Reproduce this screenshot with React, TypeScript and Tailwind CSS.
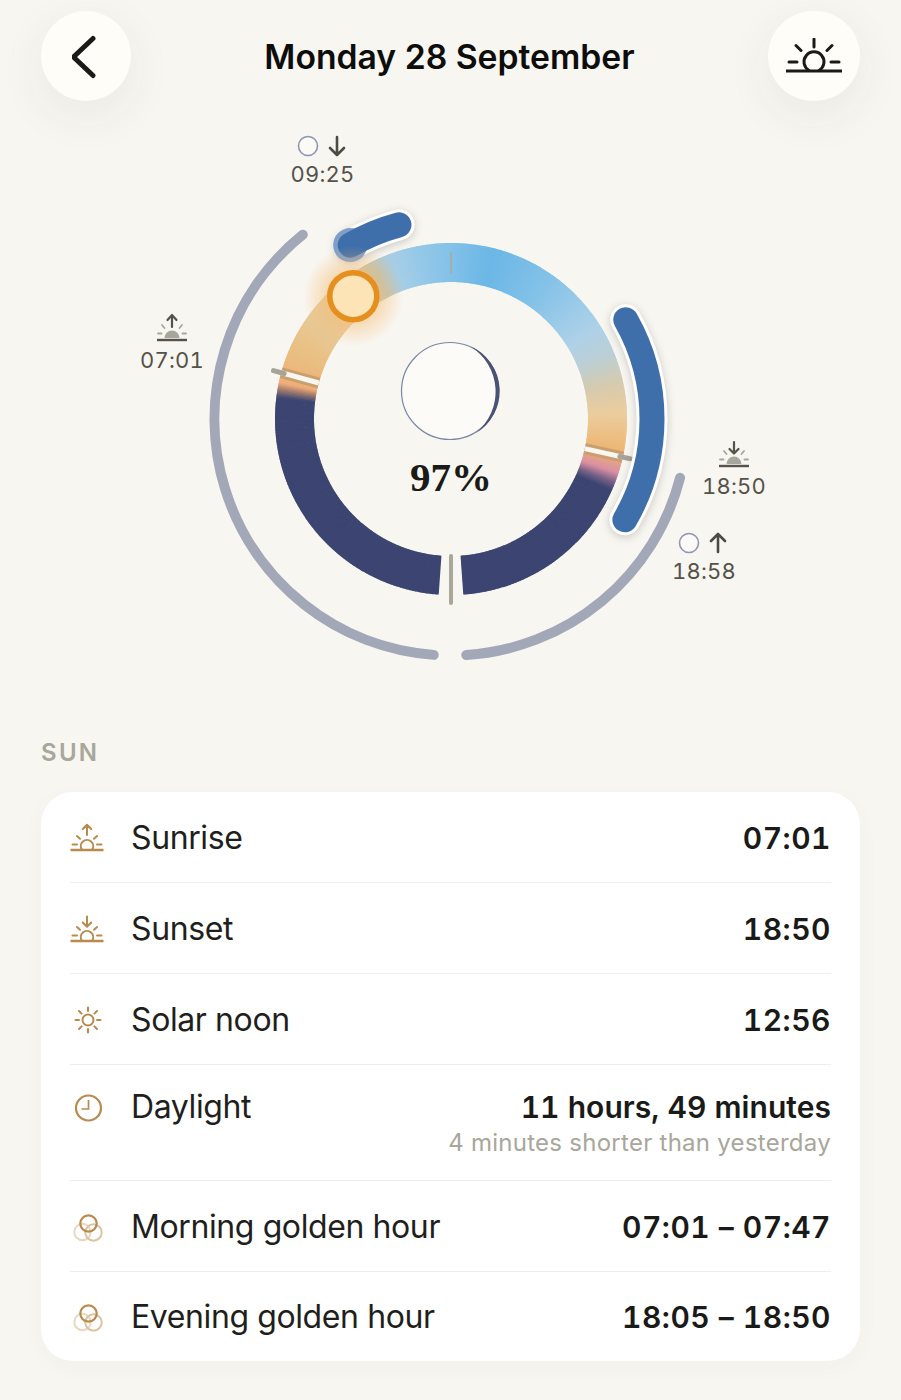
import type { ReactNode } from 'react';

const CX = 451;
const CY = 419;

type Stop = [number, string];

// ring colours by clock angle, 0 is the top of the dial
const ringStops: Stop[] = [
  [0, '#83c1e8'],
  [14, '#6bb7e6'],
  [35, '#84c2e8'],
  [58, '#aed1e8'],
  [68, '#bccfd4'],
  [78, '#d6cbae'],
  [88, '#ebcd9e'],
  [100, '#ecb877'],
  [105, '#e3a08c'],
  [108, '#d98ea2'],
  [111, '#7d6488'],
  [114, '#3c4571'],
  [277, '#3c4571'],
  [280, '#a8806f'],
  [282, '#f0ae78'],
  [292, '#e9be80'],
  [312, '#e8cda0'],
  [325, '#dcc79c'],
  [333, '#bcc8bc'],
  [340, '#a6cee6'],
  [350, '#93c8e8'],
  [360, '#83c1e8'],
];

function polar(r: number, deg: number) {
  const rad = ((deg - 90) * Math.PI) / 180;
  return [CX + r * Math.cos(rad), CY + r * Math.sin(rad)];
}

function arc(r: number, from: number, to: number) {
  const [x1, y1] = polar(r, from);
  const [x2, y2] = polar(r, to);
  const large = to - from > 180 ? 1 : 0;
  return `M${x1} ${y1}A${r} ${r} 0 ${large} 1 ${x2} ${y2}`;
}

function hex(c: string) {
  return [1, 3, 5].map((i) => parseInt(c.slice(i, i + 2), 16));
}

function colorAt(deg: number) {
  const a = ((deg % 360) + 360) % 360;
  for (let i = 0; i < ringStops.length - 1; i++) {
    const [d1, c1] = ringStops[i];
    const [d2, c2] = ringStops[i + 1];
    if (a >= d1 && a <= d2) {
      const t = (a - d1) / (d2 - d1);
      const p = hex(c1);
      const q = hex(c2);
      const rgb = p.map((v, j) => Math.round(v + (q[j] - v) * t));
      return `rgb(${rgb[0]},${rgb[1]},${rgb[2]})`;
    }
  }
  return '#3c4571';
}

function RingSegments() {
  const segs = [];
  for (let d = 0; d < 360; d += 0.5) {
    if (d >= 176 && d < 184) continue;
    const end = d === 175.5 || d === 359.5 ? d + 0.5 : d + 0.8;
    segs.push(<path key={d} d={arc(156.5, d, end)} stroke={colorAt(d + 0.25)} strokeWidth={39} fill="none" />);
  }
  return <>{segs}</>;
}

function Marker({ deg }: { deg: number }) {
  const [x1, y1] = polar(137, deg);
  const [x2, y2] = polar(176, deg);
  const [x3, y3] = polar(173, deg);
  const [x4, y4] = polar(184, deg);
  return (
    <>
      <line x1={x1} y1={y1} x2={x2} y2={y2} stroke="#c99f6d" strokeWidth={11} />
      <line x1={x1} y1={y1} x2={x2} y2={y2} stroke="#f8f6f1" strokeWidth={5} />
      <line x1={x3} y1={y3} x2={x4} y2={y4} stroke="#a6a398" strokeWidth={5} strokeLinecap="round" />
    </>
  );
}

function Dial() {
  const [sunX, sunY] = polar(157, 321.5);
  const [moonX, moonY] = polar(201, 329.9);
  return (
    <svg className="block" width={901} height={600} viewBox="0 110 901 600" fill="none">
      <defs>
        <radialGradient id="sunGlow">
          <stop offset="0.45" stopColor="#f5b564" stopOpacity="0.5" />
          <stop offset="1" stopColor="#f5b564" stopOpacity="0" />
        </radialGradient>
      </defs>

      {/* moon below the horizon */}
      <path d={arc(236.5, 184.2, 321.2)} stroke="#a3a8b8" strokeWidth={10} strokeLinecap="round" />
      <path d={arc(236.5, 104.4, 176.3)} stroke="#a3a8b8" strokeWidth={10} strokeLinecap="round" />

      <RingSegments />
      <Marker deg={285.25} />
      <Marker deg={102.5} />
      <line x1={451} y1={252} x2={451} y2={274} stroke="#9fb0ae" strokeWidth={2} />
      <line x1={451} y1={556} x2={451} y2={603} stroke="#aaa69a" strokeWidth={4} strokeLinecap="round" />

      {/* moon above the horizon */}
      <g className="drop-shadow-[0_2px_4px_rgba(0,0,0,0.18)]">
        <path d={arc(201, 60.4, 120.1)} stroke="#ffffff" strokeWidth={31} strokeLinecap="round" />
        <path d={arc(201, 329.9, 345)} stroke="#ffffff" strokeWidth={31} strokeLinecap="round" />
      </g>
      <path d={arc(201, 60.4, 120.1)} stroke="#3f6fab" strokeWidth={25} strokeLinecap="round" />
      <circle cx={moonX} cy={moonY} r={17} fill="#7f9fc9" />
      <path d={arc(201, 329.9, 345)} stroke="#3f6fab" strokeWidth={25} strokeLinecap="round" />

      {/* sun position */}
      <circle cx={sunX} cy={sunY} r={50} fill="url(#sunGlow)" />
      <circle cx={sunX} cy={sunY} r={23.5} fill="#fde4b6" stroke="#e58f1f" strokeWidth={5.5} />

      {/* moon phase */}
      <circle cx={450} cy={391} r={48.5} fill="#fcfbf8" stroke="#7a86a5" strokeWidth={1.2} />
      <path d="M470 346A49 49 0 0 1 476 433A53.5 53.5 0 0 0 470 346Z" fill="#4a5376" />

      <circle cx={308} cy={146} r={9.5} stroke="#8e96b4" strokeWidth={1.6} fill="#fbfaf6" />
      <ArrowGlyph x={337} y1={137} y2={155} down />

      <circle cx={689} cy={543} r={9.5} stroke="#8e96b4" strokeWidth={1.6} fill="#fbfaf6" />
      <ArrowGlyph x={718} y1={552} y2={534} />

      <SmallSun cx={172} base={339} up />
      <SmallSun cx={734} base={465} />
    </svg>
  );
}

function ArrowGlyph({ x, y1, y2, down }: { x: number; y1: number; y2: number; down?: boolean }) {
  const h = down ? -7 : 7;
  return (
    <path
      d={`M${x} ${y1}L${x} ${y2}M${x - 7} ${y2 + h}L${x} ${y2}L${x + 7} ${y2 + h}`}
      stroke="#4e4b43"
      strokeWidth={2.6}
      strokeLinecap="round"
      strokeLinejoin="round"
    />
  );
}

function SmallSun({ cx, base, up }: { cx: number; base: number; up?: boolean }) {
  return (
    <g>
      <path d={`M${cx - 15} ${base + 1}H${cx + 15}`} stroke="#55524a" strokeWidth={2.4} />
      <path d={`M${cx - 7.5} ${base - 1}A7.5 7.5 0 0 1 ${cx + 7.5} ${base - 1}Z`} fill="#a8a59d" />
      <path
        d={`M${cx - 14} ${base - 5.5}H${cx - 10.5}M${cx + 10.5} ${base - 5.5}H${cx + 14}M${cx - 10} ${base - 14}L${cx - 7.5} ${base - 11}M${cx + 10} ${base - 14}L${cx + 7.5} ${base - 11}`}
        stroke="#a8a59d"
        strokeWidth={1.8}
        strokeLinecap="round"
      />
      {up ? (
        <path
          d={`M${cx} ${base - 12}V${base - 23}M${cx - 4.5} ${base - 19}L${cx} ${base - 24}L${cx + 4.5} ${base - 19}`}
          stroke="#55524a"
          strokeWidth={2.2}
          strokeLinecap="round"
          strokeLinejoin="round"
        />
      ) : (
        <path
          d={`M${cx} ${base - 23}V${base - 12}M${cx - 4.5} ${base - 16}L${cx} ${base - 11.5}L${cx + 4.5} ${base - 16}`}
          stroke="#55524a"
          strokeWidth={2.2}
          strokeLinecap="round"
          strokeLinejoin="round"
        />
      )}
    </g>
  );
}

const iconColor = '#b98a4d';

function HorizonIcon({ arrow }: { arrow: 'up' | 'down' }) {
  return (
    <svg width={34} height={30} viewBox="0 0 34 30" fill="none" stroke={iconColor} strokeLinecap="round" strokeLinejoin="round" strokeWidth={2}>
      <path d="M0.5 27H33.5" strokeWidth={2.4} strokeLinecap="butt" />
      <path d="M11.8 26.5A6.2 6.2 0 1 1 22.2 26.5" />
      <path d="M2.5 21.5H7M27 21.5H31.5M7 13L10 15.8M27 13L24 15.8" />
      {arrow === 'up' ? <path d="M17 12V2M12.8 6L17 1.8L21.2 6" /> : <path d="M17 2.5V12.5M12.8 8.5L17 12.7L21.2 8.5" />}
    </svg>
  );
}

function NoonIcon() {
  return (
    <svg width={34} height={30} viewBox="0 0 34 30" fill="none" stroke={iconColor} strokeLinecap="round" strokeWidth={2}>
      <circle cx={18} cy={15} r={5.5} />
      <path d="M18 2.5V6M18 24V27.5M5.5 15H9M27 15H30.5M9 6L11.6 8.6M27 6L24.4 8.6M9 24L11.6 21.4M27 24L24.4 21.4" />
    </svg>
  );
}

function ClockIcon() {
  return (
    <svg width={34} height={30} viewBox="0 0 34 30" fill="none" stroke={iconColor} strokeWidth={2.2}>
      <circle cx={18.5} cy={16} r={12.5} />
      <path d="M18.5 8V17H11.5" strokeWidth={1.7} />
    </svg>
  );
}

function GoldenIcon() {
  return (
    <svg width={34} height={30} viewBox="0 0 34 30" fill="none" strokeWidth={2}>
      <circle cx={12.5} cy={20} r={8.2} stroke="#e8d8c3" />
      <circle cx={23.5} cy={20.5} r={8.2} stroke="#dcc3a1" />
      <circle cx={18.5} cy={11.5} r={8.2} stroke={iconColor} strokeWidth={2.2} />
    </svg>
  );
}

function Row({ icon, label, value, sub, last }: { icon: ReactNode; label: string; value: string; sub?: string; last?: boolean }) {
  return (
    <div className={`flex justify-between ${sub ? 'h-[116px] items-start pt-[24px]' : last ? 'h-[89px] items-center' : 'h-[91px] items-center pt-[1px]'} ${last ? '' : 'border-b border-[#f0eee8]'}`}>
      <div className="flex items-center gap-[27px]">
        <div className="flex h-[36px] w-[34px] items-center">{icon}</div>
        <span className="text-[32px] leading-[36px] tracking-[-0.4px] text-[#1f1f1d]">{label}</span>
      </div>
      <div className="text-right">
        <div className={`text-[30px] leading-[36px] font-semibold text-[#1a1a18] tabular-nums ${sub ? 'tracking-[0.05px]' : 'tracking-[0.5px]'}`}>{value}</div>
        {sub && <div className="mt-[1px] text-[24px] leading-[34px] tracking-[0.27px] text-[#a9a69c]">{sub}</div>}
      </div>
    </div>
  );
}

export default function App() {
  return (
    <div className="h-[1400px] w-[901px] overflow-hidden bg-[#f8f6f1] font-['Inter',sans-serif]">
      <header className="flex items-center justify-between pt-[11px] pr-[41px] pl-[41px]">
        <button className="flex h-[90px] w-[90px] items-center justify-center rounded-full bg-[#fefdf8] shadow-[0_14px_50px_rgba(60,50,30,0.07)]">
          <svg width={28} height={46} viewBox="0 0 28 46" fill="none" stroke="#1a1a18" strokeWidth={5} strokeLinecap="round" strokeLinejoin="round">
            <path d="M21 5.5L1.5 24L21 42.5" />
          </svg>
        </button>
        <h1 className="pt-[2px] text-[33.7px] leading-[40px] font-semibold text-[#0d0d0c]">Monday 28 September</h1>
        <button className="flex h-[90px] w-[92px] items-center justify-center rounded-full bg-[#fefdf8] shadow-[0_14px_50px_rgba(60,50,30,0.07)]">
          <svg width={56} height={36} viewBox="0 0 56 36" fill="none" stroke="#1a1a18" strokeWidth={3} strokeLinecap="round">
            <path d="M0 33H56" strokeLinecap="butt" />
            <path d="M23 32.5A10 10 0 1 1 33 32.5" />
            <path d="M28 1V9M10 7.5L15 12.5M46 7.5L41 12.5M3 24H11M45 24H53" />
          </svg>
        </button>
      </header>

      <section className="relative mt-[9px] h-[600px]">
        <Dial />
        <div className="absolute top-[52px] left-[322.5px] -translate-x-1/2 text-[22px] leading-[24px] tracking-[0.2px] text-[#55524a] tabular-nums">09:25</div>
        <div className="absolute top-[238px] left-[172px] -translate-x-1/2 text-[22px] leading-[24px] tracking-[0.2px] text-[#55524a] tabular-nums">07:01</div>
        <div className="absolute top-[364px] left-[734px] -translate-x-1/2 text-[22px] leading-[24px] tracking-[0.2px] text-[#55524a] tabular-nums">18:50</div>
        <div className="absolute top-[449px] left-[704px] -translate-x-1/2 text-[22px] leading-[24px] tracking-[0.2px] text-[#55524a] tabular-nums">18:58</div>
        <div className="absolute top-[344px] left-[451px] -translate-x-1/2 font-['Liberation_Serif',serif] text-[41px] leading-[46px] font-bold text-[#1a1a18]">97%</div>
      </section>

      <h2 className="mt-[28px] pl-[41px] text-[24px] leading-[30px] font-semibold tracking-[2.3px] text-[#a9a69c]">SUN</h2>

      <div className="mt-[24px] mr-[41px] ml-[41px] h-[569px] rounded-[32px] bg-white pr-[29px] pl-[29px] shadow-[0_6px_24px_rgba(60,50,30,0.03)]">
        <Row icon={<HorizonIcon arrow="up" />} label="Sunrise" value="07:01" />
        <Row icon={<HorizonIcon arrow="down" />} label="Sunset" value="18:50" />
        <Row icon={<NoonIcon />} label="Solar noon" value="12:56" />
        <Row icon={<ClockIcon />} label="Daylight" value="11 hours, 49 minutes" sub="4 minutes shorter than yesterday" />
        <Row icon={<GoldenIcon />} label="Morning golden hour" value="07:01 – 07:47" />
        <Row icon={<GoldenIcon />} label="Evening golden hour" value="18:05 – 18:50" last />
      </div>
    </div>
  );
}
